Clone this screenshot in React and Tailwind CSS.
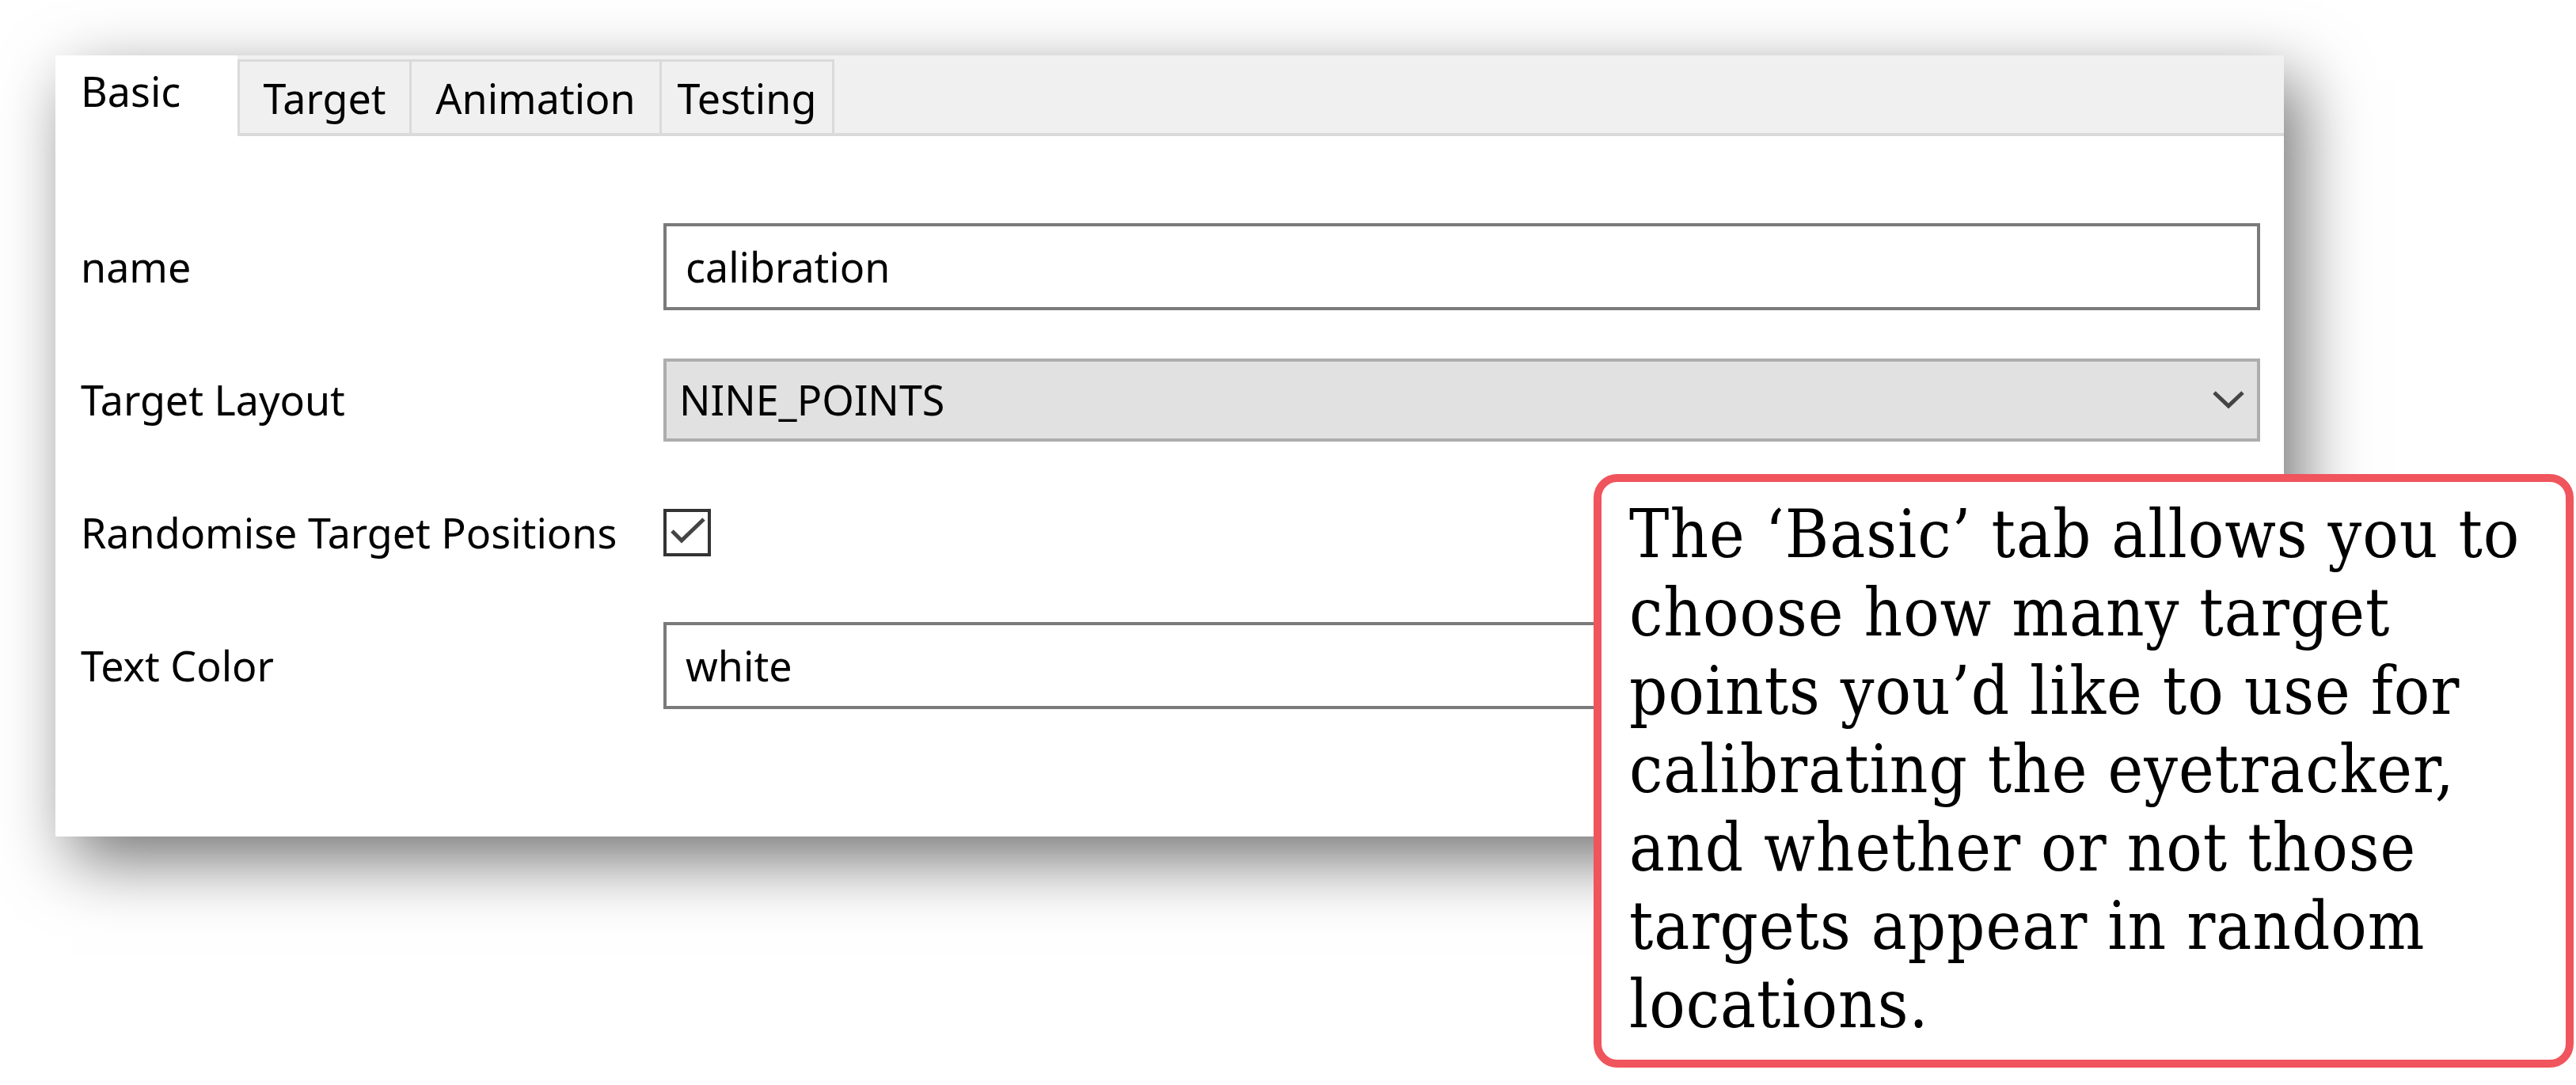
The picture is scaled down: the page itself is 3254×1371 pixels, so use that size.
const tabs = [
  { label: "Target", width: "w-[217px]" },
  { label: "Animation", width: "w-[316px]" },
  { label: "Testing", width: "w-[221px]" },
];

const Field = ({ children }) => (
  <div className="flex h-[110px] items-center border-[4px] border-[#7a7a7a] bg-white pl-[24px]">
    {children}
  </div>
);

const Row = ({ label, children }) => (
  <div className="grid h-[110px] grid-cols-[736px_1fr] items-center">
    <div>{label}</div>
    <div>{children}</div>
  </div>
);

const App = () => {
  return (
    <div className="relative min-h-screen w-[3254px] bg-white pl-[70px] pt-[70px]">
      <div
        className="flex h-[987px] w-[2815px] flex-col bg-white text-[52px] leading-[52px] text-black shadow-[20px_30px_80px_rgba(0,0,0,0.55)]"
        style={{ fontFamily: '"Noto Sans", "Open Sans", sans-serif' }}
      >
        {/* tab strip */}
        <div className="flex h-[102px] bg-[#f0f0f0]">
          <div className="h-[102px] w-[230px] bg-white pl-[32px] pt-[19px]">Basic</div>
          {tabs.map((tab, i) => (
            <div
              key={tab.label}
              className={`mt-[5px] h-[97px] ${tab.width} border-b-[4px] border-l-[3px] border-t-[3px] border-[#dadada] bg-[#f0f0f0] pt-[20px] text-center ${
                i === tabs.length - 1 ? "border-r-[3px]" : ""
              }`}
            >
              {tab.label}
            </div>
          ))}
          <div className="h-[102px] flex-1 border-b-[4px] border-[#dadada]" />
        </div>

        {/* form */}
        <div className="flex flex-col gap-[58px] pl-[32px] pr-[30px] pt-[110px]">
          <Row label="name">
            <Field>calibration</Field>
          </Row>
          <Row label="Target Layout">
            <div className="flex h-[105px] items-center justify-between border-[4px] border-[#adadad] bg-[#e1e1e1] pl-[16px] pr-[16px]">
              <span>NINE_POINTS</span>
              <svg width="40" height="24" viewBox="0 0 40 24">
                <polyline
                  points="2,3 20,20 38,3"
                  fill="none"
                  stroke="#444"
                  strokeWidth="5"
                />
              </svg>
            </div>
          </Row>
          <Row label="Randomise Target Positions">
            <div className="h-[60px] w-[60px] border-[4px] border-[#333]">
              <svg width="52" height="52" viewBox="0 0 52 52" className="block">
                <polyline
                  points="7,24 19,36 47,9"
                  fill="none"
                  stroke="#444"
                  strokeWidth="5"
                />
              </svg>
            </div>
          </Row>
          <Row label="Text Color">
            <Field>white</Field>
          </Row>
        </div>
      </div>

      {/* callout */}
      <div
        className="absolute left-[2013px] top-[599px] h-[750px] w-[1238px] rounded-[30px] border-[10px] border-[#f0545c] bg-white pl-[35px] pt-[17px] text-[84px] leading-[99px] tracking-[1px] text-black"
        style={{ fontFamily: '"DejaVu Serif Condensed", "DejaVu Serif", serif' }}
      >
        <div className="whitespace-nowrap">The ‘Basic’ tab allows you to</div>
        <div className="whitespace-nowrap">choose how many target</div>
        <div className="whitespace-nowrap">points you’d like to use for</div>
        <div className="whitespace-nowrap">calibrating the eyetracker,</div>
        <div className="whitespace-nowrap">and whether or not those</div>
        <div className="whitespace-nowrap">targets appear in random</div>
        <div className="whitespace-nowrap">locations.</div>
      </div>
    </div>
  );
};

export default App;
